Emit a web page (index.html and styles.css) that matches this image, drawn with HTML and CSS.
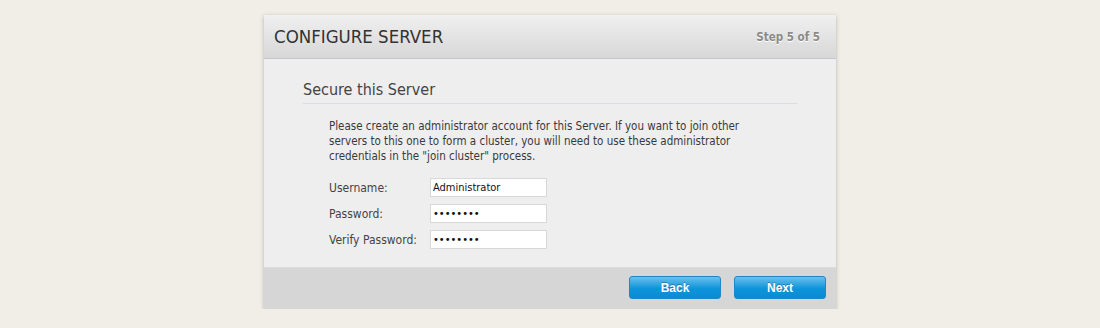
FILE: index.html
```html
<!DOCTYPE html>
<html lang="en">
<head>
    <meta charset="UTF-8">
    <title>Configure Server</title>
    <link rel="stylesheet" href="styles.css">
</head>
<body>

<div class="wizard">
    <div class="wizard-header">
        <h1>CONFIGURE SERVER</h1>
        <span class="step">Step 5 of 5</span>
    </div>

    <div class="wizard-body">
        <h2>Secure this Server</h2>
        <p class="intro">Please create an administrator account for this Server. If you want to join other
            servers to this one to form a cluster, you will need to use these administrator
            credentials in the "join cluster" process.</p>

        <form class="creds">
            <div class="row">
                <label for="username">Username:</label>
                <input type="text" id="username" value="Administrator">
            </div>
            <div class="row">
                <label for="password">Password:</label>
                <input type="password" id="password" value="password">
            </div>
            <div class="row">
                <label for="verify">Verify Password:</label>
                <input type="password" id="verify" value="password">
            </div>
        </form>
    </div>

    <div class="wizard-footer">
        <button type="button" class="btn">Back</button>
        <button type="button" class="btn">Next</button>
    </div>
</div>

</body>
</html>
```

FILE: styles.css
```css
body {
    margin: 0;
    padding-top: 15px;
    background-color: #f1eee7;
    font-family: "DejaVu Sans Condensed", "DejaVu Sans", Verdana, sans-serif;
    color: #444;
}
.wizard {
    width: 572px;
    margin: 0 auto 0 264px;
    background-color: #eeeeee;
    box-shadow: 0 1px 4px rgba(0,0,0,0.25);
}
.wizard-header {
    height: 43px;
    display: flex;
    align-items: center;
    justify-content: space-between;
    padding: 0 16px 0 10px;
    background: linear-gradient(#f0f0f0, #d7d7d7);
    border-bottom: 1px solid #c4c8cc;
}
.wizard-header h1 {
    margin: 0;
    font-size: 18.5px;
    font-weight: normal;
    color: #333;
}
.step {
    font-size: 11.5px;
    font-weight: bold;
    color: #8a8a8a;
    text-shadow: 0 1px 0 #fff;
}
.wizard-body {
    padding: 21px 39px 18px 39px;
}
.wizard-body h2 {
    margin: 0;
    padding-bottom: 4px;
    font-size: 16px;
    font-weight: normal;
    color: #444;
    border-bottom: 1px solid #dadde2;
}
.intro {
    margin: 15px 0 14px 26px;
    font-size: 11.5px;
    line-height: 15px;
    width: 450px;
    color: #3a3a3a;
}
.creds {
    margin-left: 26px;
}
.row {
    display: flex;
    align-items: center;
    margin-bottom: 7px;
}
.row:last-child {
    margin-bottom: 0;
}
.row label {
    width: 101px;
    font-size: 12px;
}
.row input {
    width: 117px;
    height: 19px;
    box-sizing: border-box;
    padding: 0 2px;
    border: 1px solid #d8d8d8;
    background: #fff;
    font-family: inherit;
    font-size: 11px;
    color: #111;
}
.wizard-footer {
    height: 42px;
    box-sizing: border-box;
    display: flex;
    justify-content: flex-end;
    align-items: flex-start;
    gap: 13px;
    padding: 8px 10px 0 0;
    background-color: #d6d6d6;
    border-top: 1px solid #dcdcdc;
}
.btn {
    width: 92px;
    height: 23px;
    border: 1px solid #1f86c9;
    border-radius: 3px;
    background: linear-gradient(#6ac0ee, #0e94da 55%, #0a8bd2);
    color: #fff;
    font-family: "Liberation Sans", Arial, sans-serif;
    font-size: 12px;
    font-weight: bold;
    text-shadow: 0 -1px 0 rgba(0,0,0,0.25);
    cursor: pointer;
}
```
